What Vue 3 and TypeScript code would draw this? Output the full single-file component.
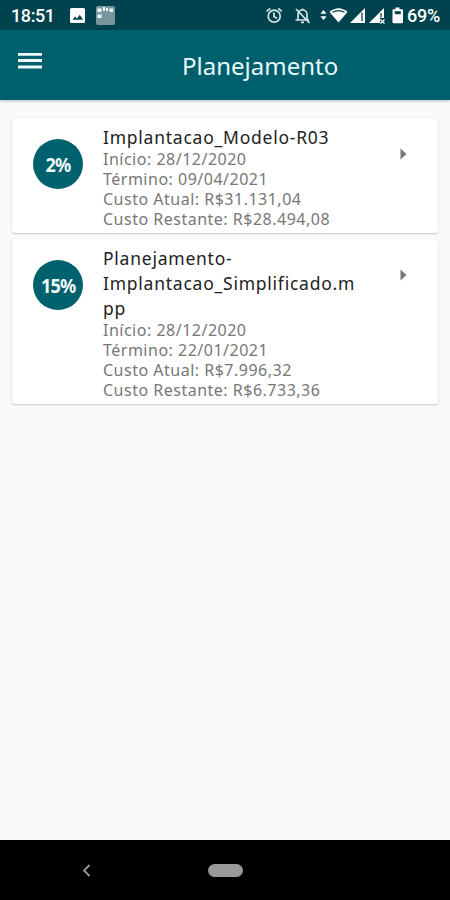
<script setup lang="ts">
interface Plan {
  percent: number
  name: string
  details: string[]
}

const plans: Plan[] = [
  {
    percent: 2,
    name: 'Implantacao_Modelo-R03',
    details: ['Início: 28/12/2020', 'Término: 09/04/2021', 'Custo Atual: R$31.131,04', 'Custo Restante: R$28.494,08'],
  },
  {
    percent: 15,
    name: 'Planejamento-Implantacao_Simplificado.mpp',
    details: ['Início: 28/12/2020', 'Término: 22/01/2021', 'Custo Atual: R$7.996,32', 'Custo Restante: R$6.733,36'],
  },
]
</script>

<template>
  <div class="screen">
    <div class="status">
      <span class="clock">18:51</span>
      <svg class="picture" width="15" height="15" viewBox="0 0 15 15">
        <rect width="15" height="15" rx="1.5" fill="#fff" />
        <path d="M2.5 11.8 5 8.5l2 2 2.8-3.7 3.2 5z" fill="#00434e" />
      </svg>
      <svg class="app" width="19" height="19" viewBox="0 0 19 19">
        <rect width="19" height="19" rx="2" fill="#76979e" />
        <path d="M1.500 2.500h4v3.500h-4zM7 1h2v4H7zM10 2h2v3h-2zM13.500 2.500H17V6h-3.500zM1.500 8.500h4V12h-4z" fill="#f2f8f9" />
      </svg>
      <svg class="icons" width="152" height="22" viewBox="264 5 152 22">
        <g fill="none" stroke="#d3e3e6" stroke-width="1.7">
          <circle cx="274.2" cy="16.2" r="6" />
          <path d="M274 12.5v4.2l3 1.6M266.6 11.4l3.6-3M281.8 11.4l-3.6-3" />
          <path d="M298 19.5v-5c0-6 9-6 9 0v5M295.5 20H309M302.5 8.5v2M296 9l13.5 14M301 22.4h3" />
        </g>
        <g fill="#fff">
          <path d="m323.500 10 3 3.800h-6zM323.500 20l3-3.800h-6z" />
          <path d="M329.500 12q9-7.500 18 0L338.500 22.500z" />
          <path d="M365 8v15h-15z" />
          <path d="M384 8v10h-4v5h-11z" />
          <path d="m380.500 19.500 4 4m0-4-4 4" stroke="#fff" stroke-width="1.300" />
          <path d="M395.500 7.500h4v1.800h2.500q1 0 1 1v12q0 1-1 1h-8.500q-1 0-1-1v-12q0-1 1-1h2z" />
        </g>
        <path d="M332.500 12.300q6-3.500 12 0" fill="none" stroke="#00434e" stroke-width="1.200" />
        <path d="M362 12.500V21M381 13v4.500" stroke="#00434e" stroke-width="1.300" />
        <path d="M394.800 11.200h6v3h-6z" fill="#00434e" />
      </svg>
      <span class="charge">69%</span>
    </div>
    <header class="bar">
      <svg class="menu" width="24" height="18" viewBox="0 0 24 18">
        <path d="M0 2.300h24M0 8.500h24M0 15h24" stroke="#eef8f9" stroke-width="2.800" />
      </svg>
      <h1>Planejamento</h1>
    </header>
    <main class="list">
      <article v-for="plan in plans" :key="plan.name" class="card">
        <div class="badge"><span>{{ plan.percent }}%</span></div>
        <div class="body">
          <h2>{{ plan.name }}</h2>
          <p v-for="line in plan.details" :key="line">{{ line }}</p>
        </div>
        <svg class="arrow" width="7" height="12" viewBox="0 0 7 12"><path d="M.5.500 6.500 6l-6 5.500z" fill="#777" /></svg>
      </article>
    </main>
    <nav class="nav">
      <svg class="back" width="9" height="13" viewBox="0 0 9 13"><path d="M7.500 1 2 6.500 7.500 12" fill="none" stroke="#999" stroke-width="1.800" /></svg>
      <span class="home"></span>
    </nav>
  </div>
</template>

<style>
body { margin: 0; }
</style>

<style scoped>
.screen { width: 450px; height: 900px; display: flex; flex-direction: column; background: #fafafa; font-family: "Noto Sans", "Open Sans", sans-serif; overflow: hidden; }
.status { height: 30px; flex: none; box-sizing: border-box; display: flex; align-items: flex-start; background: #00434e; color: #fff; font: 500 18px/21px Roboto, sans-serif; padding: 5px 0 0 11px; }
.clock { width: 59px; letter-spacing: -.4px; }
.picture { margin-top: 3px; }
.app { margin: 1px 0 0 11px; }
.icons { margin-left: 149px; }
.charge { margin-left: -9px; letter-spacing: -.2px; }
.bar { height: 70px; flex: none; display: flex; align-items: flex-start; background: #005f6d; color: #e7f8fa; box-shadow: 0 1px 3px #0004; }
.menu { margin: 22px 0 0 18px; }
h1 { margin: 20px 0 0 140px; font-size: 24px; line-height: 32px; font-weight: 400; letter-spacing: 0; white-space: nowrap; }
.list { flex: 1; padding: 18px 12px 0; display: flex; flex-direction: column; gap: 6px; }
.card { display: flex; align-items: flex-start; box-sizing: border-box; background: #fff; border-radius: 2px; box-shadow: 0 1px 2px #0003, 0 0 1px #0002; padding: 7px 31px 4px 21px; }
.badge { width: 50px; height: 50px; margin-top: 14px; flex: none; display: flex; align-items: center; justify-content: center; border-radius: 50%; background: #00616e; color: #effafb; font-size: 20px; font-weight: 700; letter-spacing: -.8px; }
.badge span { transform: scaleX(.9); }
.body { width: 258px; margin-left: 20px; flex: none; }
h2 { margin: 0 0 -1px; font-size: 17.500px; line-height: 25px; font-weight: 400; color: #222; letter-spacing: .76px; overflow-wrap: anywhere; }
p { margin: 0; font-size: 16px; line-height: 20px; color: #777; letter-spacing: .5px; white-space: nowrap; }
.arrow { margin: 23px 0 0 39px; }
.nav { height: 60px; flex: none; display: flex; align-items: center; background: #000; }
.back { margin-left: 82px; }
.home { width: 35px; height: 13px; margin-left: 117px; border-radius: 7px; background: #999; }
</style>
